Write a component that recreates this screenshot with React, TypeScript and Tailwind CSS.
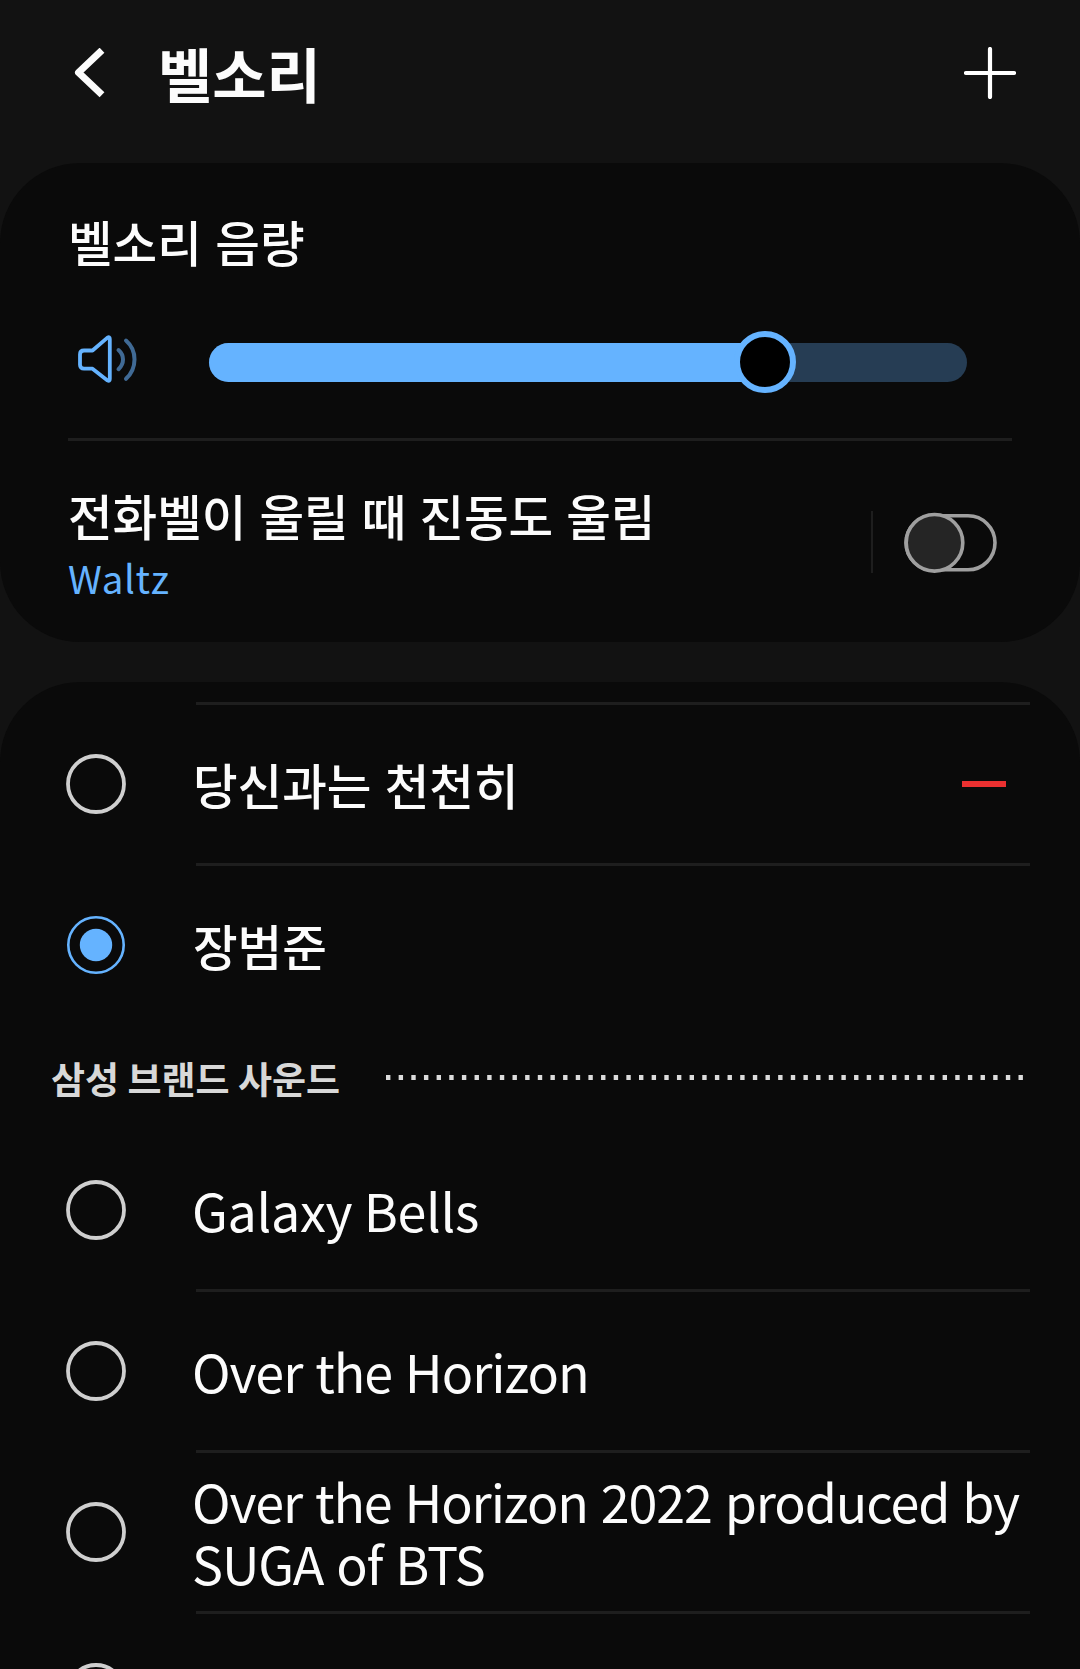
import React, { useState } from "react";
import clsx from "clsx";

type Ringtone = {
  id: string;
  title: string;
  removable?: boolean;
  divider?: boolean;
  latin?: boolean;
  spacing?: string;
};

const myTones: Ringtone[] = [
  { id: "slowly", title: "당신과는 천천히", removable: true, divider: true },
  { id: "jang", title: "장범준" },
];

const brandTones: Ringtone[] = [
  {
    id: "bells",
    title: "Galaxy Bells",
    divider: true,
    latin: true,
    spacing: "tracking-[-0.3px]",
  },
  {
    id: "horizon",
    title: "Over the Horizon",
    divider: true,
    latin: true,
    spacing: "tracking-[-1.05px] [word-spacing:2.3px]",
  },
  {
    id: "horizon-2022",
    title: "Over the Horizon 2022 produced by SUGA of BTS",
    divider: true,
    latin: true,
    spacing: "tracking-[-1.1px] [word-spacing:2.3px]",
  },
  { id: "next", title: "", latin: true },
];

function Radio({ checked }: { checked: boolean }) {
  return (
    <svg className="h-[60px] w-[60px] shrink-0" viewBox="0 0 60 60" fill="none">
      {checked ? (
        <>
          <circle cx="30" cy="30" r="27.7" stroke="#65b3ff" strokeWidth="2.6" />
          <circle cx="30" cy="30" r="16.2" fill="#65b3ff" />
        </>
      ) : (
        <circle cx="30" cy="30" r="28" stroke="#cfcfcf" strokeWidth="3.8" />
      )}
    </svg>
  );
}

function ToneRow({
  tone,
  checked,
  onSelect,
}: {
  tone: Ringtone;
  checked: boolean;
  onSelect: () => void;
}) {
  return (
    <div
      onClick={onSelect}
      className="flex h-[161px] shrink-0 cursor-pointer pl-[66px] pr-[50px]"
    >
      <div className="flex h-[158px] w-[130px] shrink-0 items-center">
        <Radio checked={checked} />
      </div>
      <div
        className={clsx(
          "flex h-full min-w-0 flex-1 items-center justify-between border-b-[3px]",
          tone.divider ? "border-[#1e1e1e]" : "border-transparent"
        )}
      >
        <p
          className={clsx(
            tone.latin
              ? "-ml-1 w-[836px] pb-px text-[52px] leading-[62px]"
              : "-ml-[3px] pb-px text-[48.5px] font-medium leading-[62px] [word-spacing:2.3px]",
            tone.spacing
          )}
        >
          {tone.title}
        </p>
        {tone.removable && <div className="mr-6 h-1.5 w-11 bg-[#eb3030]" />}
      </div>
    </div>
  );
}

function App() {
  const [selected, setSelected] = useState("jang");
  const [vibrate, setVibrate] = useState(false);
  const volume = 73.35;

  return (
    <div className="flex h-[1669px] w-[1080px] flex-col overflow-hidden bg-[#121212] font-['Noto_Sans_CJK_KR',sans-serif] text-[#fcfcfc]">
      <header className="flex h-[163px] shrink-0 items-center justify-between pb-[17px] pl-[74px] pr-16">
        <div className="flex items-center">
          <svg className="h-[50px] w-8" viewBox="0 0 32 50" fill="none">
            <path
              d="M28 2.2 L4.5 24.5 L28 46.8"
              stroke="#fcfcfc"
              strokeWidth="7"
              strokeLinejoin="round"
            />
          </svg>
          <h1 className="ml-[52px] text-[59px] font-bold leading-[70px]">
            벨소리
          </h1>
        </div>
        <svg className="h-[52px] w-[52px]" viewBox="0 0 52 52" fill="none">
          <path
            d="M26 2 V50 M2 26 H50"
            stroke="#ffffff"
            strokeWidth="4.2"
            strokeLinecap="round"
          />
        </svg>
      </header>

      <section className="flex h-[479px] shrink-0 flex-col rounded-[80px] bg-[#0a0a0a] px-[68px]">
        <h2 className="mt-[47px] text-[48.5px] font-medium leading-[62px] [word-spacing:2.6px]">
          벨소리 음량
        </h2>
        <div className="mt-[59px] flex h-[62px] items-center pl-[9px]">
          <svg className="mb-1 h-[52px] w-[62px]" viewBox="0 0 62 52" fill="none">
            <path
              d="M7 16.5 H15.5 L30.5 3.6 Q32.8 2.3 32.8 5 V45 Q32.8 47.8 30.5 46.4 L15.5 34.7 H7 Q3 34.7 3 30.7 V20.5 Q3 16.5 7 16.5 Z"
              stroke="#65b3ff"
              strokeWidth="3.8"
              strokeLinejoin="round"
            />
            <path
              d="M41.5 16 Q46 20 46 25.4 T41.5 35.2 M49 6.5 Q57.5 14 57.5 25.4 T49 44.8"
              stroke="#406a95"
              strokeWidth="4"
              strokeLinecap="round"
            />
          </svg>
          <div className="relative ml-[70px] h-[39px] w-[758px] rounded-full bg-[#263d54]">
            <div
              className="h-full rounded-l-full bg-[#65b3ff]"
              style={{ width: `${volume}%` }}
            />
            <div
              className="absolute top-1/2 h-[62px] w-[62px] -translate-x-1/2 -translate-y-1/2 rounded-full border-[6px] border-[#65b3ff] bg-black"
              style={{ left: `${volume}%` }}
            />
          </div>
        </div>
        <div className="mt-[45px] h-[3px] bg-[#1e1e1e]" />
        <div className="flex pt-[43px]">
          <div className="flex-1">
            <p className="text-[48.5px] font-medium leading-[62px] [word-spacing:2.1px]">
              전화벨이 울릴 때 진동도 울림
            </p>
            <p className="mt-[3px] text-[38.5px] leading-[56px] tracking-[0.6px] text-[#65b3ff]">
              Waltz
            </p>
          </div>
          <div className="mt-[27px] h-[62px] w-0.5 bg-[#1e1e1e]" />
          <button
            onClick={() => setVibrate(!vibrate)}
            className="ml-[31px] mr-[15px] mt-[27px] h-[62px] w-[93px]"
          >
            <svg className="h-[62px] w-[93px]" viewBox="0 0 93 62" fill="none">
              <rect
                x="2"
                y="4.8"
                width="89"
                height="54"
                rx="27"
                stroke="#9f9f9f"
                strokeWidth="3.6"
              />
              <circle
                cx={vibrate ? 62 : 30.5}
                cy="31.8"
                r="28.3"
                fill="#252525"
                stroke="#9f9f9f"
                strokeWidth="3.6"
              />
            </svg>
          </button>
        </div>
      </section>

      <section className="mt-10 flex h-[1100px] shrink-0 flex-col rounded-t-[80px] bg-[#0a0a0a] pt-5">
        <div className="ml-[196px] mr-[50px] h-[3px] shrink-0 bg-[#1e1e1e]" />
        {myTones.map((tone) => (
          <ToneRow
            key={tone.id}
            tone={tone}
            checked={selected === tone.id}
            onSelect={() => setSelected(tone.id)}
          />
        ))}
        <div className="flex h-[104px] shrink-0 items-center justify-between pb-[3px] pl-[51px] pr-[57px]">
          <h3 className="text-[37px] font-bold leading-[50px] text-[#d8d8d8]">
            삼성 브랜드 사운드
          </h3>
          <svg className="h-[5px] w-[637px]" viewBox="0 0 637 5">
            <path
              d="M0 2.5 H637"
              stroke="#dcdcdc"
              strokeWidth="5"
              strokeDasharray="4.4 8.25"
            />
          </svg>
        </div>
        {brandTones.map((tone) => (
          <ToneRow
            key={tone.id}
            tone={tone}
            checked={selected === tone.id}
            onSelect={() => setSelected(tone.id)}
          />
        ))}
      </section>
    </div>
  );
}

export default App;
